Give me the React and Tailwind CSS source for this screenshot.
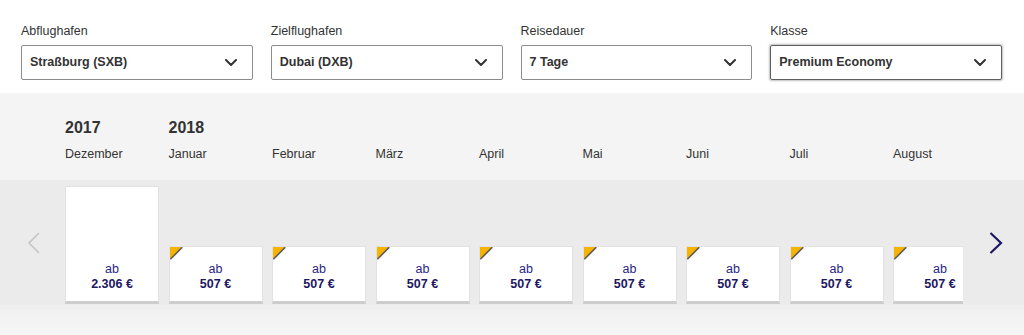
import React from "react";

const selects = [
  { label: "Abflughafen", value: "Straßburg (SXB)" },
  { label: "Zielflughafen", value: "Dubai (DXB)" },
  { label: "Reisedauer", value: "7 Tage" },
  { label: "Klasse", value: "Premium Economy", focused: true },
];

const months = ["Dezember", "Januar", "Februar", "März", "April", "Mai", "Juni", "Juli", "August"];

function ChevronDown() {
  return (
    <svg width="12" height="7" viewBox="0 0 12 7" fill="none">
      <polyline points="1,1 6,6 11,1" stroke="#333" strokeWidth="2" strokeLinecap="round" strokeLinejoin="round" />
    </svg>
  );
}

function Corner() {
  return (
    <svg className="absolute left-0 top-0" width="13" height="13" viewBox="0 0 13 13">
      <polygon points="0,0 12,0 0,12" fill="#f6b300" />
      <line x1="12.3" y1="0.3" x2="0.3" y2="12.3" stroke="#5a5a5a" strokeWidth="1.6" />
    </svg>
  );
}

function Card({ tall, price, corner }) {
  return (
    <div
      className={`relative flex w-[94px] shrink-0 flex-col items-center justify-end border border-[#e2e2e2] border-b-[3px] border-b-[#cdcdcd] bg-white pb-[9px] ${
        tall ? "h-[118px]" : "h-[58px]"
      }`}
    >
      {corner && <Corner />}
      <div className="text-[12.5px] leading-[15px] text-[#2a2585]">ab</div>
      <div className="text-[12.5px] font-bold leading-[15px] text-[#1d1763]">{price}</div>
    </div>
  );
}

export default function App() {
  return (
    <div className="w-[1024px] h-[335px] overflow-hidden bg-white font-['Liberation_Sans',Arial,sans-serif] text-[#333]">
      {/* Top selects */}
      <div className="grid grid-cols-4 gap-x-[18px] pl-[21px] pr-[22px] pt-[24px] pb-[13px]">
        {selects.map((s) => (
          <div key={s.label} className="flex flex-col">
            <div className="mb-[7px] text-[12.5px] leading-[14px] text-[#333]">{s.label}</div>
            <div
              className={`flex h-[35px] items-center justify-between rounded-[2px] border pl-[8px] pr-[15px] ${
                s.focused
                  ? "border-[#5f5f5f] shadow-[0_0_2px_1px_rgba(0,0,0,0.25)]"
                  : "border-[#8c8c8c]"
              }`}
            >
              <span className="text-[12.5px] font-bold text-[#333]">{s.value}</span>
              <ChevronDown />
            </div>
          </div>
        ))}
      </div>

      {/* Calendar header */}
      <div className="bg-[#f4f4f4] pl-[65px] pt-[25px] pb-[18px]">
        <div className="flex gap-[9.5px]">
          <div className="w-[94px] shrink-0 text-[16px] font-bold leading-[20px] text-[#333]">2017</div>
          <div className="w-[94px] shrink-0 text-[16px] font-bold leading-[20px] text-[#333]">2018</div>
        </div>
        <div className="mt-[8px] flex gap-[9.5px]">
          {months.map((m) => (
            <div key={m} className="w-[94px] shrink-0 text-[12.5px] leading-[16px] text-[#333]">
              {m}
            </div>
          ))}
        </div>
      </div>

      {/* Cards band */}
      <div className="flex h-[125px] bg-[#ebebeb]">
        <div className="flex w-[65px] shrink-0 items-center pl-[27px]">
          <svg width="13" height="22" viewBox="0 0 13 22" fill="none">
            <polyline points="12,1 2,11 12,21" stroke="#c4c4c4" strokeWidth="1.6" />
          </svg>
        </div>
        <div className="flex w-[898px] shrink-0 items-end gap-[9.5px] overflow-hidden pb-[1px]">
          <Card tall price="2.306 €" />
          {Array.from({ length: 8 }).map((_, i) => (
            <Card key={i} price="507 €" corner />
          ))}
        </div>
        <div className="flex flex-1 items-center pl-[26px]">
          <svg width="14" height="22" viewBox="0 0 14 22" fill="none">
            <polyline points="1.5,1 12,11 1.5,21" stroke="#1d1763" strokeWidth="2.2" />
          </svg>
        </div>
      </div>

      {/* Bottom strip */}
      <div className="h-[30px] bg-gradient-to-b from-[#efefef] to-[#f6f6f6]" />
    </div>
  );
}
